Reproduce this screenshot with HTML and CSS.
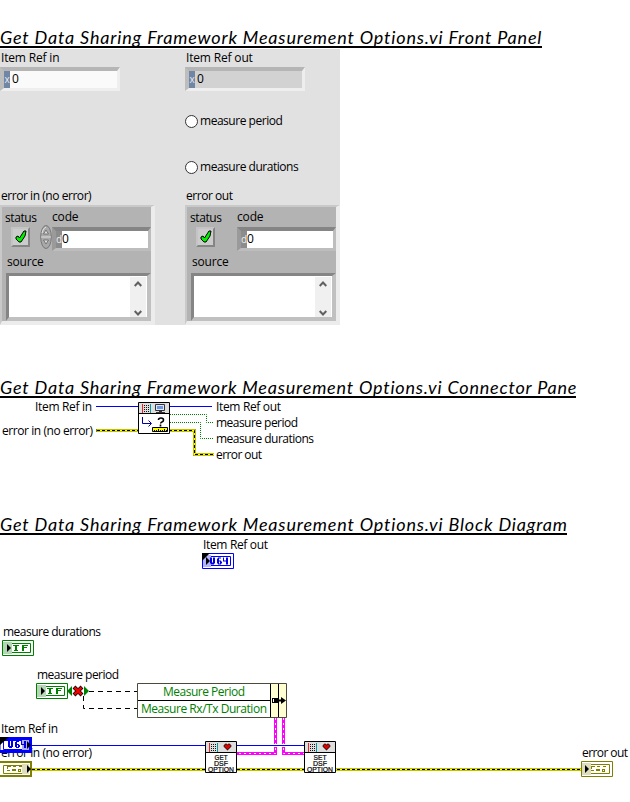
FILE: index.html
```
<!DOCTYPE html>
<html lang="en">
<head>
<meta charset="utf-8">
<title>Get Data Sharing Framework Measurement Options.vi</title>
<link rel="stylesheet" href="styles.css">
</head>
<body>
<section class="front">
  <h2 class="title"><span class="t1">Get Data Sharing Framework Measurement Options.vi Front Panel</span></h2>
  <div class="panel">
    <div class="column">
      <div class="label">Item Ref in</div>
      <div class="numeric ref"><span class="radix">x</span><span class="value">0</span></div>
      <div class="options"></div>
      <div class="label">error in (no error)</div>
      <div class="cluster">
        <div class="row">
          <div class="status"><div class="label">status</div><div class="led"><svg width="12" height="14" viewBox="0 0 12 14"><path d="M1 7l2-1 1.500 2L9 1h2l-1 5-4 6H4L1 9z" fill="#00f000" stroke="#000"/></svg></div></div>
          <svg class="spinner" width="12" height="24" viewBox="0 0 12 24"><ellipse cx="6" cy="12" rx="5.300" ry="11.500" fill="#a9a9a9" stroke="#777"/><path d="M2 8Q3 3 6 2" fill="none" stroke="#e5e5e5"/><path d="M3.500 9L6 5l2.500 4zM3.500 15L6 19l2.500-4z" fill="#ddd" stroke="#666" stroke-width=".8"/><path d="M1 12h10" stroke="#ddd"/></svg>
          <div class="code"><div class="label">code</div><div class="numeric small"><span class="radix">d</span><span class="value">0</span></div></div>
        </div>
        <div class="label source">source</div>
        <div class="textbox"><div class="scroll"><svg width="8" height="6"><path d="M.7 5L4 1.500 7.300 5"/></svg><svg width="8" height="6"><path d="M.7 1L4 4.500 7.300 1"/></svg></div></div>
      </div>
    </div>
    <div class="column">
      <div class="label">Item Ref out</div>
      <div class="numeric ref readonly"><span class="radix">x</span><span class="value">0</span></div>
      <div class="options">
        <div class="option"><i class="radio"></i><span class="label">measure period</span></div>
        <div class="option"><i class="radio"></i><span class="label">measure durations</span></div>
      </div>
      <div class="label">error out</div>
      <div class="cluster">
        <div class="row">
          <div class="status"><div class="label">status</div><div class="led"><svg width="12" height="14" viewBox="0 0 12 14"><path d="M1 7l2-1 1.500 2L9 1h2l-1 5-4 6H4L1 9z" fill="#00f000" stroke="#000"/></svg></div></div>
          <div class="spinner"></div>
          <div class="code"><div class="label">code</div><div class="numeric small"><span class="radix">d</span><span class="value">0</span></div></div>
        </div>
        <div class="label source">source</div>
        <div class="textbox"><div class="scroll"><svg width="8" height="6"><path d="M.7 5L4 1.500 7.300 5"/></svg><svg width="8" height="6"><path d="M.7 1L4 4.500 7.300 1"/></svg></div></div>
      </div>
    </div>
  </div>
</section>

<section class="connector">
  <h2 class="title"><span class="t2">Get Data Sharing Framework Measurement Options.vi Connector Pane</span></h2>
  <svg class="diagram" width="630" height="70" viewBox="0 398 630 70">
    <defs>
      <g id="grid"><path d="M4 4h1v9H4z" fill="#f02020"/><path d="M12 4h1v9h-1z" fill="#00999b"/><path d="M6.500 5v7M8.500 5v7M10.500 5v7" stroke="#111" stroke-dasharray="1 1" fill="none"/></g>
      <path id="heart" d="M20 5h2v1h1V5h2v1h1v2h-1v1h-1v1h-1v1h-1v-1h-1V9h-1V8h-1V6h1z" fill="#e00000" stroke="#111" stroke-width=".6"/>
    </defs>
    <path class="blue" d="M96 406.500h43M169 406.500h43"/>
    <path class="dots" d="M170 414.500h36.500v8H213M170 422.500h30.500v16H213"/>
    <path class="error" d="M96 430.500h43M169 430.500h25.500v24H214"/><path class="core" d="M97 430.500h42M169 430.500h25.500v24H214"/><path class="errordash" d="M97 430.500h42M169 430.500h25.500v24H214"/>
    <g transform="translate(138 402)">
      <path d="M.5.500h31v31H.500z" fill="#fff" stroke="#000"/><path d="M1 1h30v10H1z" fill="#dedede"/><path d="M1 11.500h30" stroke="#000"/>
      <use href="#grid" y="-2"/>
      <path d="M17.500 2.500h9v6h-9z" fill="#dbe7ff" stroke="#333"/><path d="M19 4h6v3h-6z" fill="#7295df"/><path d="M21 9h3v1h3v1h-9v-1h3z" fill="#333"/>
      <path d="M4.500 15v6.500H13M10.500 18.500l3 3-3 3" fill="none" stroke="#00009c"/>
      <path d="M20.500 18q0-2 2.500-2t2.500 2q0 1.500-1.500 2t-1 1.500M22.500 22.500v2" fill="none" stroke="#000" stroke-width="1.600"/>
      <path d="M14.500 25.500h15v4h-15z" fill="#ff0" stroke="#000"/><path d="M16.500 28v2M18.500 28v2M20.500 27v3M22.500 28v2M24.500 28v2M26.500 27v3M28.500 28v2" stroke="#000"/>
    </g>
    <text x="35" y="411" textLength="57">Item Ref in</text><text x="2" y="435" textLength="91">error in (no error)</text>
    <text x="216" y="411" textLength="65">Item Ref out</text><text x="216" y="427" textLength="82">measure period</text><text x="216" y="443" textLength="98">measure durations</text><text x="216" y="459" textLength="46">error out</text>
  </svg>
</section>

<section class="block">
  <h2 class="title"><span class="t3">Get Data Sharing Framework Measurement Options.vi Block Diagram</span></h2>
  <svg class="diagram" width="630" height="245" viewBox="0 535 630 245">
    <defs>
      <g id="tf"><path d="M.5.500h31v15H.500z" fill="#fff" stroke="#008000"/><path d="M3.500 3.500h25v9h-25z" fill="none" stroke="#008000"/><path d="M1 2h9v12H1z" fill="#b4d6b4"/><path d="M5 4l4 4-4 4z" fill="#000"/><path d="M11 5h6v1h-2v4h1v1h-4v-1h1V6h-2zM20 5h6v1h-4v1h3v1h-3v3h-2z" fill="#008000"/></g>
      <path id="digits" fill="#0000e0" d="M8 4h2v5h1V4h2v6h-1v1H9v-1H8zM15 5h1V4h3v1h-2v2h2v1h1v2h-1v1h-3v-1h-1zM17 8v2h1V8zM21 4h1v3h2V4h2v7h-2V8h-3z"/>
      <g id="clusterglyph" fill="#808000"><path d="M7 5h4v1H8v2H7zM13 5h3v1h-3zM19 5h3v1h-3zM7 9h3v1H7zM12 8h4v2h-4zM18 8h3v3h-3z"/><path d="M19 9h1v1h-1z" fill="#fff"/></g>
    </defs>
    <text x="203" y="549" textLength="65">Item Ref out</text>
    <g transform="translate(202 553)"><path d="M.5.500h31v15H.500z" fill="#fff" stroke="#00f"/><path d="M3.500 3.500h25v9h-25z" fill="none" stroke="#00f"/><path d="M1 2h8v12H1z" fill="#b5b5ff"/><path d="M0 0h8L0 8z" fill="#000"/><path d="M4 4l4 4-4 4z" fill="#000"/><use href="#digits" y=".5"/></g>
    <text x="3" y="636" textLength="98">measure durations</text><use href="#tf" x="2" y="640"/>
    <text x="37" y="679" textLength="82">measure period</text><use href="#tf" x="36" y="683"/>
    <path d="M89 691.500h48M83.500 696v12.500H137" fill="none" stroke="#000" stroke-dasharray="5 4"/>
    <path d="M72 686v10l-5-5zM84 686v10l5-5z" fill="#008000"/><path d="M74 687l8 8M82 687l-8 8" stroke="#000" stroke-width="4"/><path d="M74.500 687.500l7 7M81.500 687.500l-7 7" stroke="#f00000" stroke-width="2.500"/>
    <path class="pink" d="M275.500 718v35.500H236M283.500 718v35.500H305"/><path class="pinkdash" d="M275.500 718v35.500H236M283.500 718v35.500H305"/>
    <path d="M272 744h15v3h-15z" fill="#fff"/>
    <path class="blue" d="M30 745.500h176M236 745.500h69"/>
    <path class="error" d="M32 769.500h550"/><path class="core" d="M32 769.500h550"/><path class="errordash" d="M32 769.500h550"/>
    <path d="M137.500 683.500h149v34h-149z" fill="#fff" stroke="#4b4b3c"/><path d="M271 684h15v33h-15z" fill="#ffffd2"/><path d="M138 700.500h133M270.500 684v33M278.500 684v33" stroke="#000"/>
    <path d="M272 698h6v5h-6z" fill="#000"/><path d="M277 700.500h7" stroke="#000" stroke-width="2"/><path d="M281 697v7l5-3.500z" fill="#000"/><path d="M273 699h1v3h-1z" fill="#fff"/>
    <text class="green" x="163" y="696" textLength="82">Measure Period</text><text class="green" x="141" y="713" textLength="126">Measure Rx/Tx Duration</text>
    <text x="1" y="733" textLength="57">Item Ref in</text><text x="1" y="757" textLength="91">error in (no error)</text>
    <g transform="translate(0 737)"><path d="M-1 1.500h31.500v13H-1z" fill="#fff" stroke="#00f" stroke-width="3"/><path d="M3.500 3.500h24v9h-24z" fill="#fff" stroke="#00f"/><path d="M22 3h7v10h-7z" fill="#aaaaff"/><use href="#digits"/><path d="M0 0h9L0 8zM27 4l4 4-4 4z" fill="#000"/></g>
    <g transform="translate(0 761)"><path d="M-1 1h32v14H-1z" fill="#fff" stroke="#808000" stroke-width="2"/><path d="M3.500 4.500h24v8h-24z" fill="none" stroke="#808000"/><path d="M22 3h7v10h-7z" fill="#dedebc"/><use href="#clusterglyph"/><path d="M27 4l4 4-4 4z" fill="#000"/></g>
    <g transform="translate(205 741)"><path d="M.5.500h31v31H.500z" fill="#fff" stroke="#000"/><path d="M1 1h30v10H1z" fill="#dedede"/><path d="M1 11.500h30" stroke="#000"/><use href="#grid" y="-2"/><use href="#heart" y="-2"/><text class="pixel" x="9.500" y="18.500" textLength="13" lengthAdjust="spacingAndGlyphs">GET</text><text class="pixel" x="9" y="24.500" textLength="14" lengthAdjust="spacingAndGlyphs">DSF</text><text class="pixel" x="3" y="30.500" textLength="26" lengthAdjust="spacingAndGlyphs">OPTION</text></g>
    <g transform="translate(304 741)"><path d="M.5.500h31v31H.500z" fill="#fff" stroke="#000"/><path d="M1 1h30v10H1z" fill="#dedede"/><path d="M1 11.500h30" stroke="#000"/><use href="#grid" y="-2"/><use href="#heart" y="-2"/><text class="pixel" x="9.500" y="18.500" textLength="13" lengthAdjust="spacingAndGlyphs">SET</text><text class="pixel" x="9" y="24.500" textLength="14" lengthAdjust="spacingAndGlyphs">DSF</text><text class="pixel" x="3" y="30.500" textLength="26" lengthAdjust="spacingAndGlyphs">OPTION</text></g>
    <text x="582" y="757" textLength="46">error out</text>
    <g transform="translate(581 761)"><path d="M.5.500h31v15H.500z" fill="#fff" stroke="#808000"/><path d="M3.500 3.500h25v9h-25z" fill="none" stroke="#808000"/><path d="M1 2h9v12H1z" fill="#dedebc"/><use href="#clusterglyph" x="3"/><path d="M4 4l4 4-4 4z" fill="#000"/></g>
  </svg>
</section>
</body>
</html>
```
FILE: styles.css
```
* { box-sizing: border-box; }
body { margin: 0; background: #fff; color: #000; font: 12px "Open Sans", sans-serif; overflow: hidden; }
section { display: flex; flex-direction: column; align-items: flex-start; }
.front { padding-top: 26px; height: 376px; }
.connector { height: 137px; }
.title { margin: 0; height: 22px; border-bottom: 2px solid #000; overflow: hidden; font: italic 18px/22px Lato, sans-serif; white-space: nowrap; }
.title span { display: block; }
.t1 { width: 542px; letter-spacing: .82px; }
.t2 { width: 576px; letter-spacing: .8px; }
.t3 { width: 567px; letter-spacing: .82px; }
.panel { margin-top: 1px; width: 340px; height: 276px; background: #e1e1e1; display: grid; grid-template-columns: 185px 155px; }
.column { display: flex; flex-direction: column; }
.label { height: 18px; line-height: 18px; padding-left: 1px; letter-spacing: -.17px; white-space: nowrap; }
.numeric { display: flex; background: #fafafa; border: solid; border-color: #b5b5b5 #eee #eee #bdbdbd; border-width: 4px 3px 3px 4px; }
.ref { width: 120px; height: 24px; }
.readonly { background: #d2d2d2; }
.radix { width: 6px; background: #7185a5; color: #e5e9f2; font-size: 10px; line-height: 17px; text-align: center; overflow: hidden; }
.value { padding-left: 2px; line-height: 15px; }
.options { height: 96px; padding-top: 21px; display: flex; flex-direction: column; gap: 28px; }
.option { display: flex; align-items: center; height: 18px; gap: 1px; }
.option .label { letter-spacing: -.47px; }
.radio { width: 13px; height: 13px; background: #fff; border: 1px solid #333; border-radius: 50%; }
.cluster { width: 155px; height: 120px; background: #b3b3b3; border: solid; border-color: #c9c9c9 #ececec #ececec #c9c9c9; border-width: 2px 4px 4px 2px; padding-left: 2px; }
.column > .label { letter-spacing: -.45px; }
.column > .label:first-child { letter-spacing: -.17px; }
.row { display: flex; height: 44px; }
.status { width: 36px; padding-top: 2px; }
.status .label { letter-spacing: -.4px; }
.led { margin-left: 7px; width: 19px; height: 20px; background: #ccc; border: 2px solid; border-color: #c4c4c4 #858585 #858585 #c4c4c4; display: grid; place-items: center; }
.spinner { width: 12px; margin-top: 18px; }
.code { width: 99px; padding-top: 1px; }
.code .label { height: 19px; padding-left: 0; }
.small { width: 99px; height: 24px; background: #fff; border-color: #858585 #bdbdbd #bdbdbd #9a9a9a; }
.small .radix { background: #8c8c8c; color: #eee; width: 6px; }
.small .value { padding-left: 0; line-height: 16px; }
.source { height: 22px; line-height: 22px; padding-left: 3px; }
.textbox { margin-left: 2px; width: 145px; height: 48px; background: #fff; border: solid; border-color: #858585 #c0c0c0 #c0c0c0 #858585; border-width: 3px 4px 4px 3px; display: flex; justify-content: flex-end; }
.scroll { width: 16px; margin: 1px 1px 0 0; background: #f0f0f0; display: flex; flex-direction: column; align-items: center; justify-content: space-between; padding: 4px 0 1px; }
.scroll path { fill: none; stroke: #606060; stroke-width: 2; }
.diagram { display: block; flex: none; }
.diagram text { font: 12px "Open Sans", sans-serif; }
.diagram .green { fill: #008000; }
.diagram .pixel { font: 7px "Liberation Sans", sans-serif; stroke: #000; stroke-width: .2px; }
.blue, .dots, .error, .core, .errordash, .pink, .pinkdash { fill: none; }
.blue { stroke: #0000ff; }
.dots { stroke: #008000; stroke-dasharray: 1 1; }
.error { stroke: #858500; stroke-width: 3; }
.core { stroke: #ffff00; stroke-width: 2; }
.errordash { stroke: #000; stroke-dasharray: 3 2; }
.pink { stroke: #f0f; stroke-width: 3; }
.pinkdash { stroke: #fff; stroke-dasharray: 2 3; }
```
